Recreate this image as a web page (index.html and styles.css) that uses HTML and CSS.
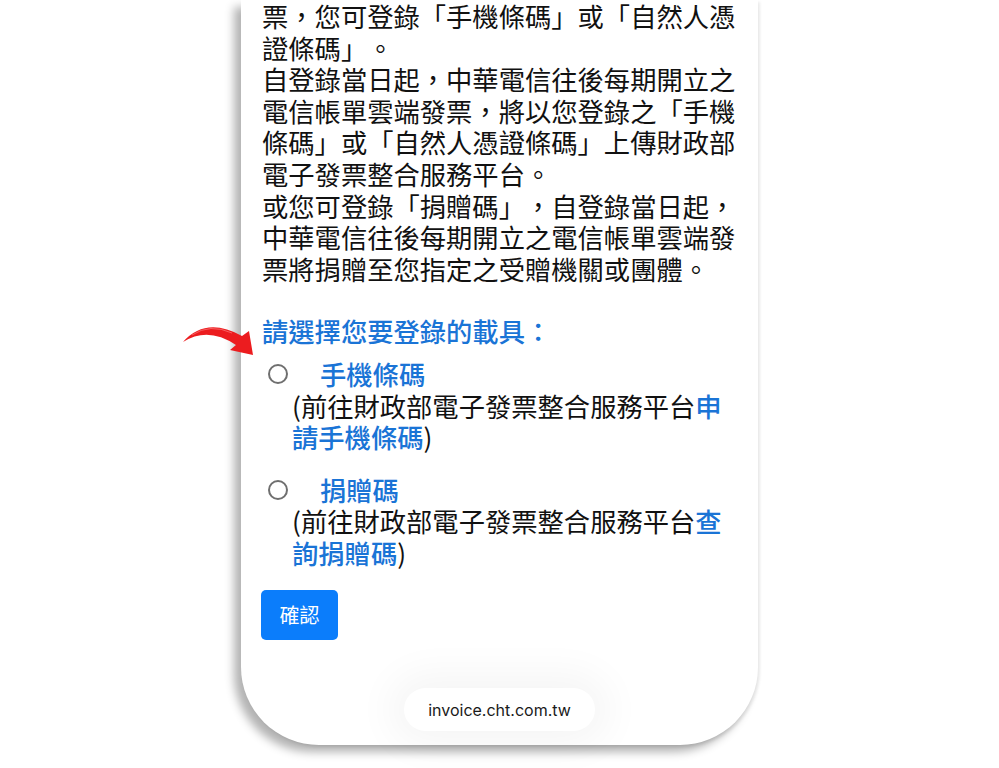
FILE: index.html
```html
<!DOCTYPE html>
<html lang="zh-Hant">
<head>
<meta charset="utf-8">
<title>invoice.cht.com.tw</title>
<link rel="stylesheet" href="styles.css">
</head>
<body>
<div class="stage">
  <div class="phone">
    <div class="content">
      <p class="intro">票，您可登錄「手機條碼」或「自然人憑證條碼」。<br>自登錄當日起，中華電信往後每期開立之電信帳單雲端發票，將以您登錄之「手機條碼」或「自然人憑證條碼」上傳財政部電子發票整合服務平台。<br>或您可登錄「捐贈碼」，自登錄當日起，中華電信往後每期開立之電信帳單雲端發票將捐贈至您指定之受贈機關或團體。</p>

      <h2 class="heading">請選擇您要登錄的載具：</h2>

      <div class="option">
        <label class="option-row"><input type="radio" name="carrier" class="radio"><span class="option-label">手機條碼</span></label>
        <p class="option-note">(前往財政部電子發票整合服務平台<a class="link" href="#">申請手機條碼</a>)</p>
      </div>

      <div class="option option-second">
        <label class="option-row"><input type="radio" name="carrier" class="radio"><span class="option-label">捐贈碼</span></label>
        <p class="option-note">(前往財政部電子發票整合服務平台<a class="link" href="#">查詢捐贈碼</a>)</p>
      </div>

      <button class="confirm" type="button">確認</button>
    </div>
    <div class="url-pill">invoice.cht.com.tw</div>
  </div>
  <svg class="annot-arrow" width="80" height="40" viewBox="0 0 80 40" aria-hidden="true">
    <path d="M3,21 Q26,-5 62,15 L69,10 L73,34 L50,29 L56,24 Q28,5 3,21 Z" fill="#ec1c1f"/>
    <path d="M12,14 Q30,2 52,12" fill="none" stroke="#ff8a8a" stroke-width="1" opacity="0.6"/>
  </svg>
</div>
</body>
</html>
```

FILE: styles.css
```css
html, body {
  margin: 0;
  padding: 0;
  background: #ffffff;
  overflow: hidden;
}

.stage {
  position: relative;
  width: 999px;
  height: 768px;
  display: flex;
  justify-content: center;
  align-items: flex-start;
}

.phone {
  width: 517px;
  height: 745px;
  background: #ffffff;
  border-radius: 0 0 78px 78px;
  box-shadow: -7px 7px 10px rgba(0, 0, 0, 0.30), 2px 2px 3px rgba(0, 0, 0, 0.08);
  display: flex;
  flex-direction: column;
  box-sizing: border-box;
}

.content {
  width: 474px;
  padding-left: 21px;
  font-family: "Noto Sans CJK TC", "Noto Sans", sans-serif;
  font-size: 26.3px;
  line-height: 31.6px;
  color: #111111;
  text-spacing-trim: space-all;
  display: flex;
  flex-direction: column;
  align-items: flex-start;
}

.intro {
  margin: 0;
}

.heading {
  margin: 31px 0 0;
  font-size: 26.3px;
  line-height: 31.6px;
  font-weight: 500;
  color: #1a74d6;
}

.option {
  margin-top: 11px;
  display: flex;
  flex-direction: column;
}

.option-second {
  margin-top: 21px;
}

.option-row {
  display: flex;
  align-items: center;
  padding-left: 6px;
}

.radio {
  appearance: none;
  -webkit-appearance: none;
  width: 20px;
  height: 20px;
  margin: 0 32px 0 0;
  border: 2px solid #6f6f6f;
  border-radius: 50%;
  background: #ffffff;
  box-sizing: border-box;
}

.option-label {
  color: #1a74d6;
  font-weight: 500;
}

.option-note {
  margin: 0;
  padding-left: 30px;
}

.link {
  color: #1a74d6;
  text-decoration: none;
  font-weight: 500;
}

.confirm {
  margin-top: 21px;
  margin-left: -1px;
  width: 77px;
  height: 50px;
  border: none;
  border-radius: 5px;
  background: #0b7dfb;
  color: #ffffff;
  font-family: "Noto Sans CJK TC", "Noto Sans", sans-serif;
  font-size: 20px;
  padding: 0;
}

.url-pill {
  margin-top: auto;
  margin-bottom: 14px;
  align-self: center;
  width: 191px;
  height: 43px;
  border-radius: 22px;
  background: #ffffff;
  box-shadow: 0 0 40px 14px rgba(0, 0, 0, 0.045);
  display: flex;
  align-items: center;
  justify-content: center;
  font-family: "Inter", "Liberation Sans", sans-serif;
  font-size: 16px;
  color: #1a1a1a;
}

.annot-arrow {
  position: absolute;
  left: 180px;
  top: 321px;
}
```
